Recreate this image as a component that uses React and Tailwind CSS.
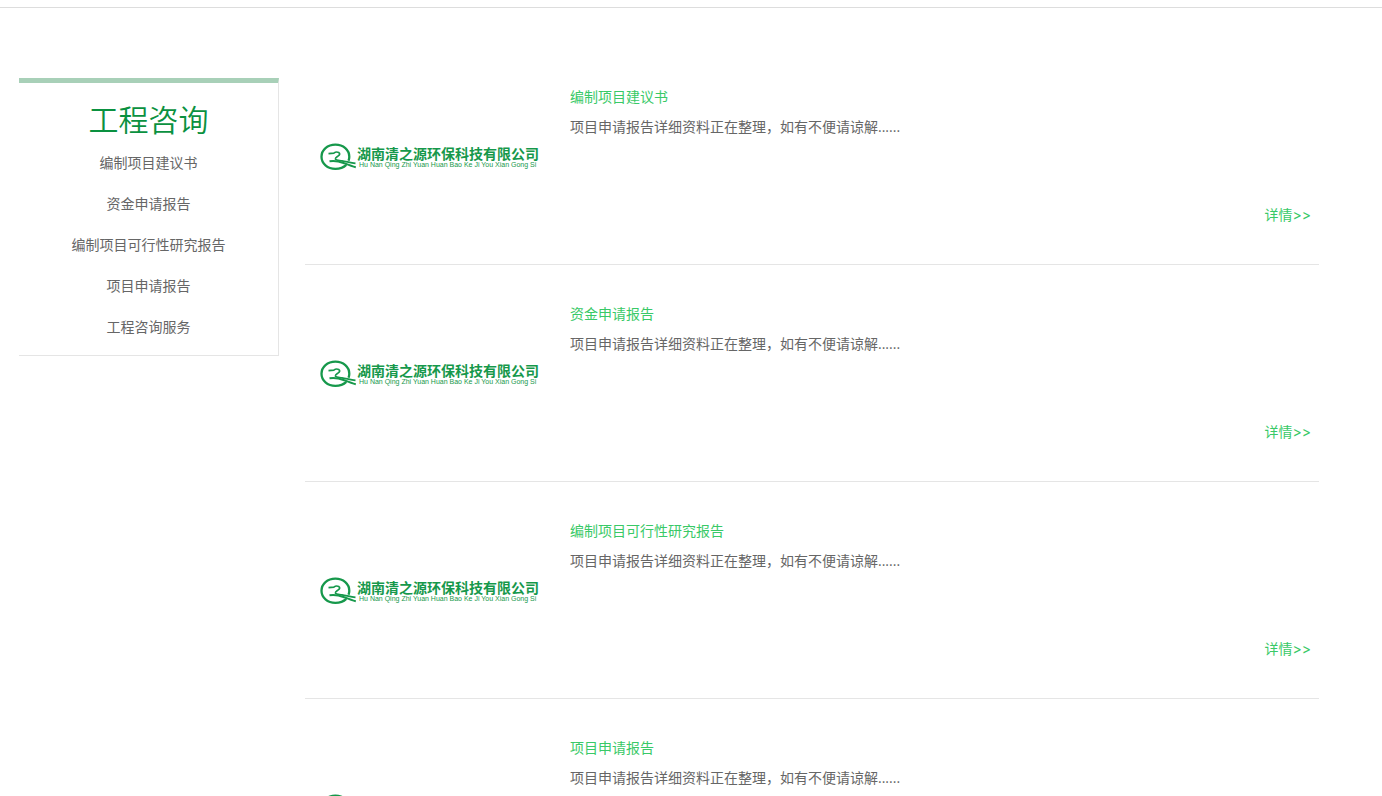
const services = [
  '编制项目建议书',
  '资金申请报告',
  '编制项目可行性研究报告',
  '项目申请报告',
  '工程咨询服务',
];

const summary = '项目申请报告详细资料正在整理，如有不便请谅解......';

function Logo() {
  return (
    <div className="flex w-[220px] shrink-0 items-center pt-0.5 text-[#16984b]">
      <svg viewBox="0 0 37 28" className="h-7 w-[37px] shrink-0" fill="none" stroke="currentColor" aria-hidden="true">
        <path d="M26.300 21.800 C23.600 24.400 19.800 25.800 15.400 25.800 C7.500 25.800 1.500 20.500 1.500 13.700 C1.500 6.900 7.500 1.700 15.400 1.700 C23.300 1.700 29.300 6.900 29.300 13.700 C29.300 15.200 29 16.500 28.500 17.700" strokeWidth="2.300" />
        <path d="M8.500 10.600 L13.800 10.200 C15.300 9 17.200 8.700 18.700 9.500 C20.300 10.500 19.800 11.800 18.300 12.900 C16.800 14 15.200 14.700 15.400 16 C15.800 17.300 19 17.300 22 17.900 C27 18.800 31 19.800 35.500 20.400" strokeWidth="1.700" />
        <path d="M9.500 18.300 C14 17.700 19 18.300 23.500 20 C27.500 21.600 31.500 23.300 35.800 24.200" strokeWidth="1.900" />
      </svg>
      <div className="flex flex-col whitespace-nowrap">
        <span className="text-[14px] leading-[14px] font-bold">湖南清之源环保科技有限公司</span>
        <span className="pl-0.5 font-['Liberation_Sans',sans-serif] text-[7px] leading-[7px]">Hu Nan Qing Zhi Yuan Huan Bao Ke Ji You Xian Gong Si</span>
      </div>
    </div>
  );
}

function ServiceRow({ title }) {
  return (
    <li className="flex items-center border-b border-[#e5e5e5] py-[34px] pr-2 pl-[15px]">
      <Logo />
      <div className="ml-[30px] flex h-[148px] grow flex-col">
        <h3>
          <a href="#" className="text-[#39c967]">{title}</a>
        </h3>
        <p>{summary}</p>
        <a href="#" className="mt-auto self-end font-['Inter','Noto_Sans_CJK_SC',sans-serif] text-[#39c967]">详情&gt;&gt;</a>
      </div>
    </li>
  );
}

export default function App() {
  return (
    <div className="bg-white pt-[7px] font-['Open_Sans','Noto_Sans_CJK_SC',sans-serif] text-[14px] leading-[30px] text-[#666]">
      <div className="border-t border-[#ddd]" />
      <div className="flex items-start pt-10 pr-[63px] pl-[19px]">
        <aside className="mt-[30px] w-[260px] shrink-0 border-t-[5px] border-r border-b border-[#e5e5e5] border-t-[#a8d0b8] pt-3.5 pb-2 text-center">
          <h2 className="text-[30px] leading-[45px] font-[350] text-[#0a9140]">工程咨询</h2>
          <nav>
            <ul>
              {services.map((name) => (
                <li key={name} className="leading-[41px]">
                  <a href="#">{name}</a>
                </li>
              ))}
            </ul>
          </nav>
        </aside>
        <main className="ml-[26px] grow">
          <ul>
            {services.map((name) => (
              <ServiceRow key={name} title={name} />
            ))}
          </ul>
        </main>
      </div>
    </div>
  );
}
